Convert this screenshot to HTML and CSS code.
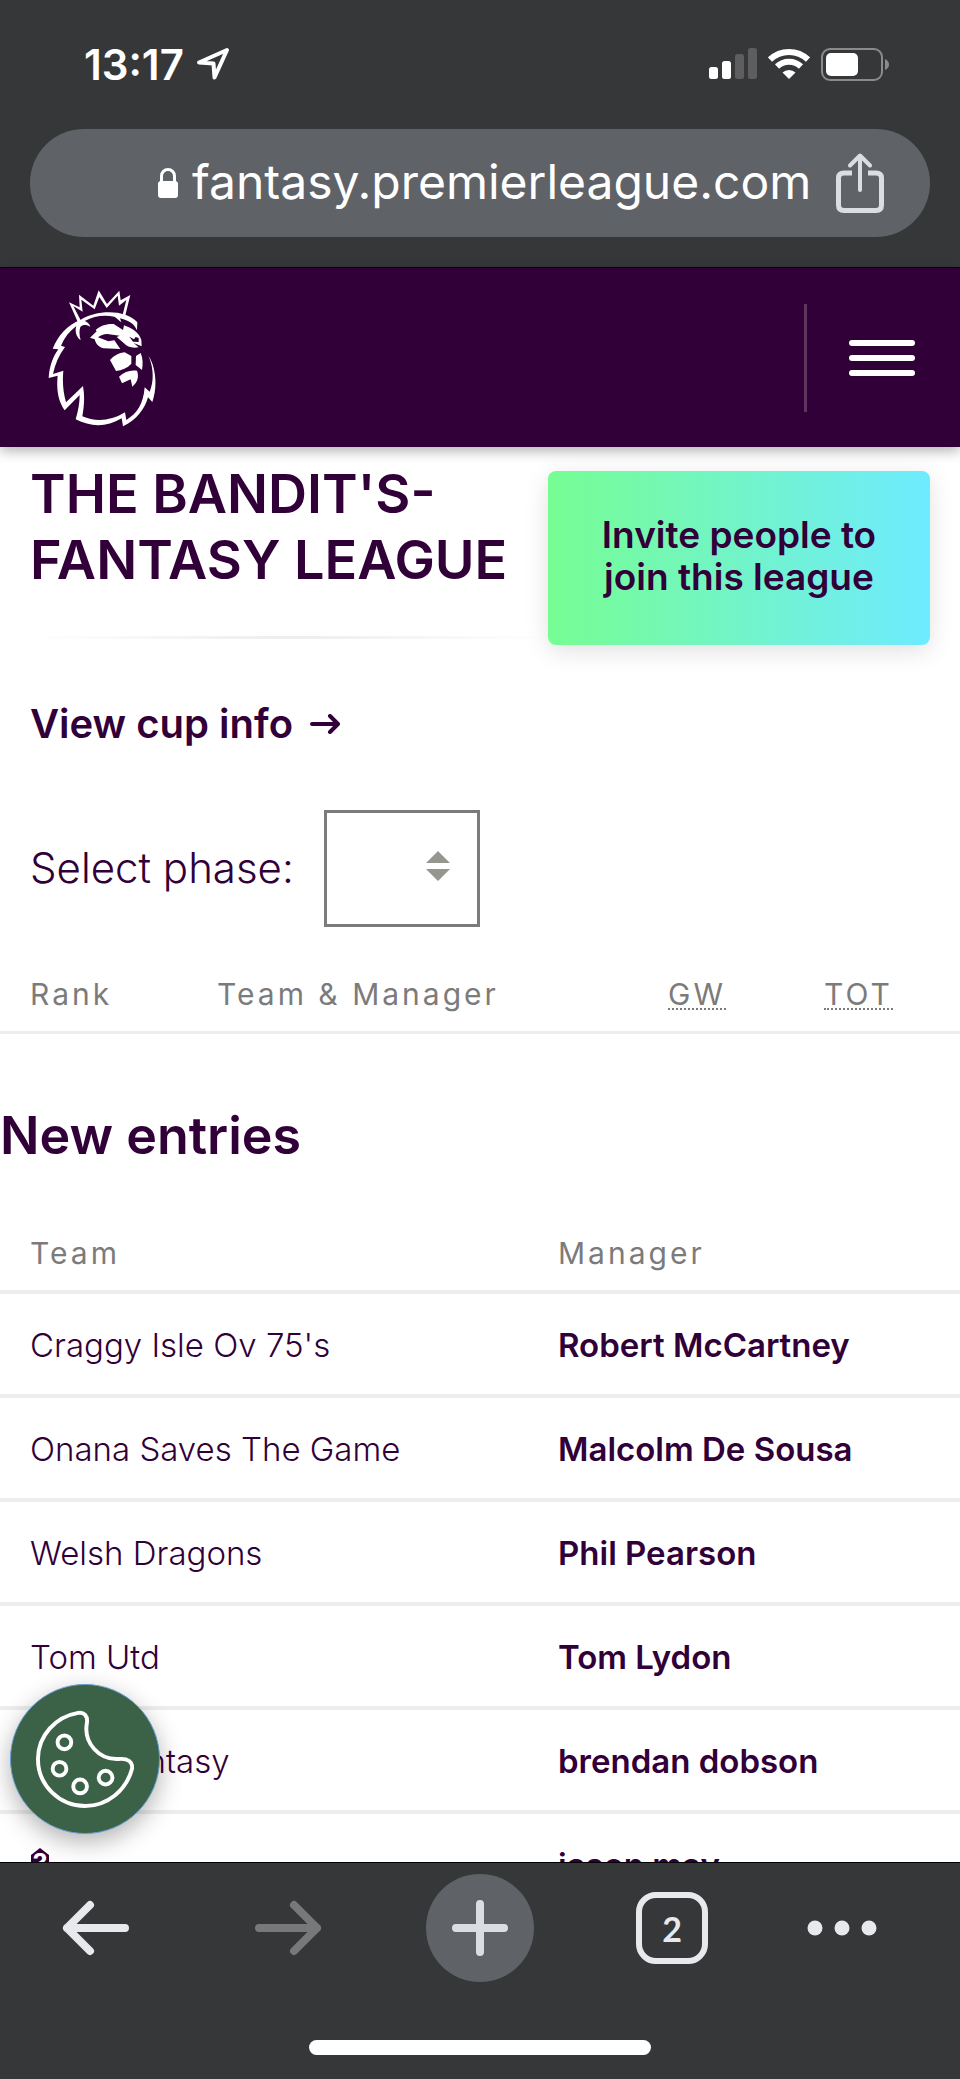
FILE: index.html
```html
<!DOCTYPE html>
<html lang="en">
<head>
  <meta charset="UTF-8">
  <meta name="viewport" content="width=device-width, initial-scale=1.0">
  <title>The Bandit's-Fantasy League</title>
  <link rel="stylesheet" href="styles.css">
</head>
<body>

<div class="browser-top">
  <div class="status">
    <span class="time">13:17</span>
    <svg class="location" width="34" height="34" viewBox="0 0 34 34" fill="none" stroke="#fff" stroke-width="4" stroke-linejoin="round"><path d="M31 3 L3 15.500 L17.500 16.500 L18.500 30.500 Z"/></svg>
    <div class="signals">
      <svg width="48" height="32" viewBox="0 0 48 32"><g fill="#fff"><rect x="0" y="19" width="9" height="12" rx="2.500"/><rect x="13" y="13" width="9" height="18" rx="2.500"/></g><g fill="#5e5e60"><rect x="26" y="6" width="9" height="25" rx="2.500"/><rect x="39" y="0" width="9" height="31" rx="2.500"/></g></svg>
      <svg width="42" height="32" viewBox="0 0 42 32" fill="none" stroke="#fff"><path d="M2 11.500 A27.500 27.500 0 0 1 40 11.500" stroke-width="6"/><path d="M9 18.500 A17.500 17.500 0 0 1 33 18.500" stroke-width="6"/><path d="M14.500 24.500 A9.500 9.500 0 0 1 27.500 24.500 L21 31 Z" fill="#fff" stroke="none"/></svg>
      <svg width="68" height="33" viewBox="0 0 68 33"><rect x="1" y="1" width="60" height="31" rx="8" fill="none" stroke="#8a8b8c" stroke-width="2"/><rect x="5" y="5" width="32" height="23" rx="5" fill="#fff"/><path d="M64 11 Q68 13 68 16.500 Q68 20 64 22 Z" fill="#8a8b8c"/></svg>
    </div>
  </div>
  <div class="address-bar">
    <svg width="20" height="30" viewBox="0 0 20 30"><rect x="0" y="13" width="20" height="17" rx="3" fill="#fff"/><path d="M3.500 14 V8 A6.500 6.500 0 0 1 16.500 8 V14" fill="none" stroke="#fff" stroke-width="3"/></svg>
    <span class="url">fantasy.premierleague.com</span>
    <button class="share" aria-label="Share">
      <svg width="48" height="61" viewBox="0 0 48 61" fill="none" stroke="#dcdde1"><path d="M16 20 H8 Q2.500 20 2.500 25 V52 Q2.500 57.500 8 57.500 H40 Q45.500 57.500 45.500 52 V25 Q45.500 20 40 20 H32" stroke-width="5"/><path d="M24 37 V4 M14 12.500 L24 2.500 L34 12.500" stroke-width="4" stroke-linecap="round" stroke-linejoin="round"/></svg>
    </button>
  </div>
</div>

<header class="site-header">
  <a href="#" aria-label="Home">
    <svg width="109" height="138" viewBox="144 84 327 414" fill="#fff">
      <path d="M233 182 L207 124 L239 139 L237 101 L280 134 L296 88 L321 129 L358 89 L362 118 L391 102 L376 163 L368 161 L379 117 L357 134 L353 104 L320 141 L298 108 L284 145 L244 116 L248 152 L220 135 L242 178 Z"/>
      <path d="M242 176 C290 145 380 145 412 184 L411 208 C407 199 402 192 394 186 C382 179 371 174 360 172 L364 184 C357 178 351 172 343 167 C312 160 282 165 254 180 C264 184 269 190 271 198 C260 190 249 190 241 198 C237 211 238 223 242 238 C228 226 224 210 229 195 C208 211 193 230 183 254 L195 258 C177 282 165 309 159 339 L190 329 C187 362 189 391 198 424 L249 375 C255 406 252 438 247 466 C286 483 331 481 375 454 L379 477 C411 457 430 430 434 379 L449 392 C462 361 461 321 446 285 C468 319 473 378 457 423 L444 409 C435 443 409 478 369 496 L365 472 C319 500 271 498 227 475 C234 451 239 427 239 402 L194 448 C173 419 169 382 173 344 L146 351 C148 317 158 288 175 265 L158 263 C175 222 201 193 242 176 Z"/>
      <path d="M270 230 L290 211 L287 207 C300 194 322 187 341 189 L369 207 L372 193 C397 202 418 216 424 237 L425 256 L401 246 L416 259 C397 263 380 257 372 247 L350 228 L359 224 L322 219 C310 219 302 224 294 229 L325 241 L343 238 L361 264 L310 262 C296 258 287 248 284 235 Z M388 227 L399 242 L416 243 L416 231 L407 228 L402 235 Z" fill-rule="evenodd"/>
      <path d="M330 297 C341 284 356 276 374 274 L394 285 L394 308 C382 321 366 328 348 330 Z M408 285 L422 276 C429 291 429 309 426 327 L407 312 Z M357 347 C373 332 391 326 411 329 C417 345 414 362 397 377 L392 355 L366 367 Z"/>
    </svg>
  </a>
  <button class="menu" aria-label="Menu"><span></span><span></span><span></span></button>
</header>

<main class="content">
  <div class="league-head">
    <h1>THE BANDIT'S-FANTASY LEAGUE</h1>
    <button class="invite">Invite people to join this league</button>
  </div>

  <a class="cup-link" href="#">View cup info
    <svg width="32" height="20" viewBox="0 0 32 20" fill="none" stroke="#310038" stroke-width="4" stroke-linecap="round" stroke-linejoin="round"><path d="M3 10 H29 M21 2 L29 10 L21 18"/></svg>
  </a>

  <div class="phase">
    <label for="phase">Select phase:</label>
    <div class="select-box">
      <select id="phase"><option></option></select>
      <svg width="24" height="30" viewBox="0 0 24 30" fill="#95968d"><path d="M12 0 L24 12 H0 Z M0 18 H24 L12 30 Z"/></svg>
    </div>
  </div>

  <table class="standings">
    <thead>
      <tr>
        <th class="rank">Rank</th>
        <th>Team &amp; Manager</th>
        <th class="points"><abbr title="Gameweek">GW</abbr></th>
        <th class="points"><abbr title="Total">TOT</abbr></th>
      </tr>
    </thead>
  </table>

  <h2>New entries</h2>

  <table class="entries">
    <thead>
      <tr><th>Team</th><th>Manager</th></tr>
    </thead>
    <tbody>
      <tr><td>Craggy Isle Ov 75's</td><td>Robert McCartney</td></tr>
      <tr><td>Onana Saves The Game</td><td>Malcolm De Sousa</td></tr>
      <tr><td>Welsh Dragons</td><td>Phil Pearson</td></tr>
      <tr><td>Tom Utd</td><td>Tom Lydon</td></tr>
      <tr><td>New Fantasy</td><td>brendan dobson</td></tr>
      <tr>
        <td><svg class="emoji" width="20" height="34" viewBox="0 0 20 34"><path d="M10 0 L19 7 V27 L10 34 L1 27 V7 Z" fill="#310038"/><text x="10" y="24" text-anchor="middle" fill="#fff">?</text></svg></td>
        <td>jason may</td>
      </tr>
    </tbody>
  </table>

  <button class="cookies" aria-label="Cookie settings">
    <svg width="98" height="98" viewBox="0 0 100 100" fill="none" stroke="#fff" stroke-width="4"><path d="M43 3 C49 2 53 6 52 13 C48 34 65 51 84 50 C94 49 99 53 98 60 C92 82 73 98 50 98 C24 98 2 77 2 50 C2 26 20 7 43 3 Z"/><circle cx="29" cy="33" r="7"/><circle cx="24" cy="60" r="7"/><circle cx="45" cy="78" r="7"/><circle cx="71" cy="69" r="7"/></svg>
  </button>
</main>

<div class="browser-bottom">
  <nav class="toolbar">
    <button aria-label="Back"><svg width="68" height="56" viewBox="0 0 68 56" fill="none" stroke="#e8e9ed" stroke-width="8" stroke-linecap="round" stroke-linejoin="round"><path d="M63 28 H5 M28 5 L5 28 L28 51"/></svg></button>
    <button aria-label="Forward"><svg width="68" height="56" viewBox="0 0 68 56" fill="none" stroke="#77787a" stroke-width="8" stroke-linecap="round" stroke-linejoin="round"><path d="M5 28 H63 M40 5 L63 28 L40 51"/></svg></button>
    <button class="new-tab" aria-label="New tab"><svg width="56" height="56" viewBox="0 0 56 56" stroke="#dcdde1" stroke-width="8" stroke-linecap="round"><path d="M4 28 H52 M28 4 V52"/></svg></button>
    <button class="tabs" aria-label="Tabs">2</button>
    <button class="more" aria-label="More"><svg width="70" height="16" viewBox="0 0 70 16" fill="#e8e9ed"><circle cx="8" cy="8" r="7.500"/><circle cx="35" cy="8" r="7.500"/><circle cx="62" cy="8" r="7.500"/></svg></button>
  </nav>
  <div class="home-indicator"></div>
</div>

</body>
</html>
```
FILE: styles.css
```css
* {
  box-sizing: border-box;
}
body {
  display: flex;
  flex-direction: column;
  height: 100vh;
  margin: 0;
  background-color: #fff;
  color: #310038;
  font-family: Inter, "Open Sans", sans-serif;
}
svg {
  display: block;
}
button {
  padding: 0;
  border: none;
  background: none;
  color: inherit;
  font-family: inherit;
  cursor: pointer;
}

/* browser top */
.browser-top {
  padding: 40px 30px 30px;
  border-bottom: 1px solid #000;
  background-color: #363739;
  color: #fff;
}
.status {
  display: flex;
  align-items: center;
  height: 48px;
  padding: 0 41px 0 54px;
}
.time {
  font-size: 42px;
  font-weight: 600;
}
.location {
  margin-left: 12px;
}
.signals {
  display: flex;
  align-items: center;
  gap: 11px;
  margin-left: auto;
}
.address-bar {
  display: flex;
  align-items: center;
  height: 108px;
  margin-top: 41px;
  padding: 0 46px 0 128px;
  border-radius: 54px;
  background-color: #5f6267;
}
.url {
  margin-left: 14px;
  padding-bottom: 4px;
  font-size: 48px;
}
.share {
  margin-left: auto;
}

/* site header */
.site-header {
  position: relative;
  z-index: 1;
  display: flex;
  align-items: center;
  justify-content: space-between;
  flex-shrink: 0;
  height: 179px;
  padding: 0 45px 0 48px;
  background-color: #310038;
  box-shadow: 0 4px 12px rgba(0, 0, 0, 0.3);
}
.menu {
  display: flex;
  flex-direction: column;
  justify-content: center;
  gap: 9px;
  height: 108px;
  padding-left: 42px;
  border-left: 3px solid #5e355f;
}
.menu span {
  width: 66px;
  height: 6px;
  border-radius: 3px;
  background-color: #fff;
}

/* league */
.content {
  position: relative;
  flex: 1;
  min-height: 0;
  overflow: hidden;
}
.league-head {
  display: flex;
  justify-content: space-between;
  padding: 14px 30px 0;
}
h1 {
  flex: 1;
  height: 178px;
  margin: 0;
  border-bottom: 3px solid;
  border-image: linear-gradient(to right, #fff, #ededed, #fff) 1;
  font-size: 54px;
  font-weight: 600;
  line-height: 66px;
}
.invite {
  width: 382px;
  height: 174px;
  margin-top: 10px;
  padding: 0 40px 4px;
  border-radius: 8px;
  background-image: linear-gradient(to right, #76fd92, #6eebff);
  box-shadow: 0 6px 24px rgba(0, 0, 0, 0.12);
  font-size: 37px;
  font-weight: 600;
  line-height: 42px;
}
.cup-link {
  display: flex;
  align-items: center;
  gap: 16px;
  padding: 52px 30px 0;
  color: inherit;
  font-size: 40px;
  font-weight: 600;
  line-height: 54px;
  text-decoration: none;
}
.phase {
  display: flex;
  align-items: center;
  gap: 30px;
  padding: 59px 30px 0;
  font-size: 42px;
  font-weight: 300;
}
.phase label {
  padding-bottom: 2px;
}
.select-box {
  position: relative;
}
.select-box select {
  display: block;
  width: 156px;
  height: 117px;
  border: 3px solid #7b7b7b;
  border-radius: 0;
  background-color: #fff;
  appearance: none;
}
.select-box svg {
  position: absolute;
  top: 41px;
  right: 30px;
  pointer-events: none;
}

/* tables */
table {
  width: 100%;
  border-collapse: collapse;
  table-layout: fixed;
}
th {
  color: #7b7b7b;
  font-size: 30px;
  font-weight: 400;
  letter-spacing: 3px;
  line-height: 36px;
  text-align: left;
}
th, td {
  padding: 2px 0 0 30px;
}
.standings {
  margin-top: 29px;
}
.standings th {
  height: 76px;
  border-bottom: 3px solid #ededed;
}
.standings .rank {
  width: 187px;
}
.standings .points {
  width: 156px;
  padding-left: 20px;
}
abbr {
  display: inline-block;
  border-bottom: 2px dotted #7b7b7b;
  line-height: 28px;
  text-decoration: none;
}
h2 {
  margin: 69px 0 0;
  font-size: 52px;
  font-weight: 600;
  line-height: 66px;
}
.entries {
  margin-top: 46px;
}
.entries th {
  height: 77px;
  border-bottom: 4px solid #ededed;
}
.entries th:first-child {
  width: 55%;
}
.entries td {
  height: 104px;
  border-bottom: 4px solid #ededed;
  font-size: 33px;
  font-weight: 300;
}
.entries td:last-child {
  font-weight: 600;
}
.emoji text {
  font-size: 26px;
  font-weight: 700;
}

.cookies {
  position: absolute;
  bottom: 28px;
  left: 10px;
  display: flex;
  align-items: center;
  justify-content: center;
  width: 150px;
  height: 150px;
  border: 1px solid #659cd2;
  border-radius: 50%;
  background-color: #3b6147;
  box-shadow: 0 8px 24px rgba(0, 0, 0, 0.3);
}

/* browser bottom */
.browser-bottom {
  padding: 11px 0 24px;
  border-top: 1px solid #000;
  background-color: #363739;
  color: #e8e9ed;
}
.toolbar {
  display: grid;
  grid-template-columns: repeat(5, 1fr);
  align-items: center;
  justify-items: center;
  height: 108px;
}
.new-tab {
  display: flex;
  align-items: center;
  justify-content: center;
  width: 108px;
  height: 108px;
  border-radius: 50%;
  background-color: #5f6266;
}
.tabs {
  width: 72px;
  height: 72px;
  border: 6px solid #e8e9ed;
  border-radius: 20px;
  font-family: Lato, sans-serif;
  font-size: 34px;
  font-weight: 700;
}
.more {
  margin-right: 44px;
}
.home-indicator {
  width: 342px;
  height: 15px;
  margin: 58px auto 0;
  border-radius: 8px;
  background-color: #fff;
}
```
